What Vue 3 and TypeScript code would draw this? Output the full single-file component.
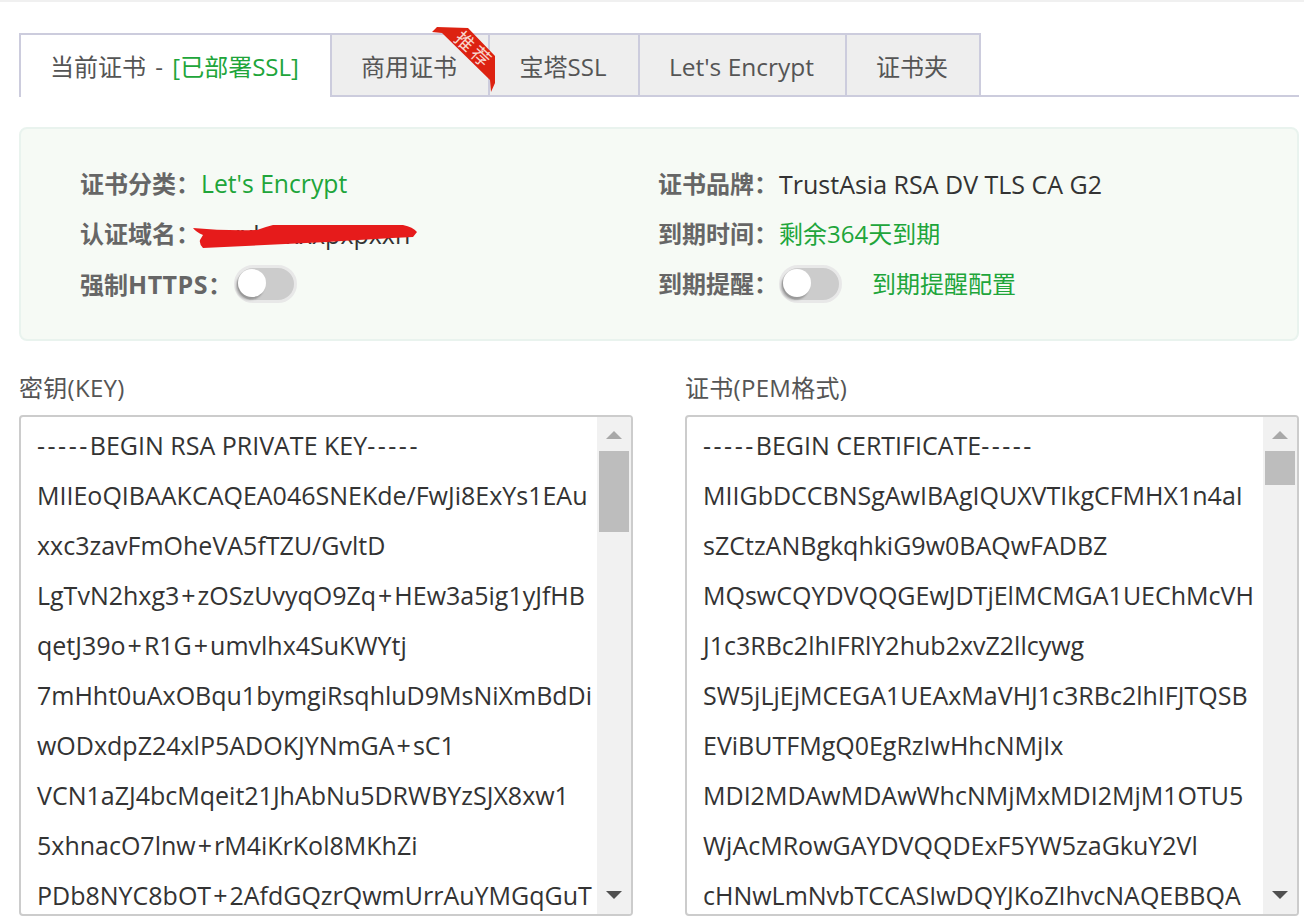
<script setup lang="ts">
interface Tab { label: string; note?: string; active?: boolean; latin?: boolean; width: number }
const tabs: Tab[] = [
  { label: '当前证书 - ', note: '[已部署SSL]', active: true, width: 313 },
  { label: '商用证书', width: 158 },
  { label: '宝塔SSL', width: 150 },
  { label: "Let's Encrypt", latin: true, width: 207 },
  { label: '证书夹', width: 134 },
]
const keyLines = [
  '-----BEGIN RSA PRIVATE KEY-----',
  'MIIEoQIBAAKCAQEA046SNEKde/FwJi8ExYs1EAu',
  'xxc3zavFmOheVA5fTZU/GvltD',
  'LgTvN2hxg3+zOSzUvyqO9Zq+HEw3a5ig1yJfHB',
  'qetJ39o+R1G+umvlhx4SuKWYtj',
  '7mHht0uAxOBqu1bymgiRsqhluD9MsNiXmBdDi',
  'wODxdpZ24xlP5ADOKJYNmGA+sC1',
  'VCN1aZJ4bcMqeit21JhAbNu5DRWBYzSJX8xw1',
  '5xhnacO7lnw+rM4iKrKol8MKhZi',
  'PDb8NYC8bOT+2AfdGQzrQwmUrrAuYMGqGuT',
]
const certLines = [
  '-----BEGIN CERTIFICATE-----',
  'MIIGbDCCBNSgAwIBAgIQUXVTIkgCFMHX1n4aI',
  'sZCtzANBgkqhkiG9w0BAQwFADBZ',
  'MQswCQYDVQQGEwJDTjElMCMGA1UEChMcVH',
  'J1c3RBc2lhIFRlY2hub2xvZ2llcywg',
  'SW5jLjEjMCEGA1UEAxMaVHJ1c3RBc2lhIFJTQSB',
  'EViBUTFMgQ0EgRzIwHhcNMjIx',
  'MDI2MDAwMDAwWhcNMjMxMDI2MjM1OTU5',
  'WjAcMRowGAYDVQQDExF5YW5zaGkuY2Vl',
  'cHNwLmNvbTCCASIwDQYJKoZIhvcNAQEBBQA',
]
const boxes = [
  { title: '密钥(KEY)', lines: keyLines, thumb: 81 },
  { title: '证书(PEM格式)', lines: certLines, thumb: 34 },
]
function tokens(line: string): string[] {
  return line.split(/(-+|\+)/).filter(Boolean)
}
function tokenClass(token: string): string {
  if (token[0] === '-') return 'dash'
  if (token === '+') return 'plus'
  return ''
}
</script>

<template>
  <div class="page">
    <div class="tabs">
      <div
        v-for="tab in tabs"
        :key="tab.label"
        class="tab"
        :class="{ active: tab.active, latin: tab.latin }"
        :style="{ width: tab.width + 'px' }"
      >
        {{ tab.label }}<span v-if="tab.note" class="green">{{ tab.note }}</span>
      </div>
      <div class="ribbon">
        <svg width="66" height="70" viewBox="0 0 66 70">
          <path d="M0 5 L5 0 L36 1 L63 29 L63 56 L59 65 L58 53 L10 6 Z" fill="#dd2211" />
        </svg>
        <span class="ribbon-text">推荐</span>
      </div>
    </div>

    <div class="panel">
      <div class="row"><b>证书分类：</b><span class="green value encrypt">Let's Encrypt</span></div>
      <div class="row"><b>证书品牌：</b><span class="value latin">TrustAsia RSA DV TLS CA G2</span></div>
      <div class="row">
        <b>认证域名：</b><span class="value latin">xxxxlxxxxxpxpxxn</span>
        <svg class="scribble" width="226" height="26" viewBox="0 0 226 26">
          <path d="M0 4 Q32 7 64 6 Q72 3 80 1 L210 1 Q220 3 224 8 L220 13 Q180 15 134 18 L10 24 Q6 20 7 16 L10 11 Q3 8 0 4 Z" fill="#e61b1b" />
        </svg>
      </div>
      <div class="row"><b>到期时间：</b><span class="green value">剩余364天到期</span></div>
      <div class="row">
        <b>强制<span class="https">HTTPS</span>：</b>
        <span class="switch first"></span>
      </div>
      <div class="row">
        <b>到期提醒：</b>
        <span class="switch"></span>
        <span class="green config">到期提醒配置</span>
      </div>
    </div>

    <div class="editors">
      <section v-for="box in boxes" :key="box.title" class="editor">
        <h3>{{ box.title }}</h3>
        <div class="box">
          <div class="lines">
            <div v-for="line in box.lines" :key="line">
              <span v-for="(token, i) in tokens(line)" :key="i" :class="tokenClass(token)">{{ token }}</span>
            </div>
          </div>
          <div class="scrollbar">
            <i class="up"></i>
            <i class="thumb" :style="{ height: box.thumb + 'px' }"></i>
            <i class="down"></i>
          </div>
        </div>
      </section>
    </div>
  </div>
</template>

<style>
html, body { margin: 0; background: #fff; overflow: hidden; }
</style>

<style scoped>
.page {
  box-sizing: border-box;
  width: 1304px;
  height: 916px;
  overflow: hidden;
  border-top: 2px solid #f0f0f0;
  padding: 31px 5px 0 19px;
  font-family: "Open Sans", "Noto Sans CJK SC", sans-serif;
  font-size: 24px;
  color: #333;
}
.green { color: #20a53a; }
.latin { font-size: 25px; }
.encrypt { font-size: 24.7px; }
.tabs {
  position: relative;
  display: flex;
  height: 64px;
  box-sizing: border-box;
  border-bottom: 2px solid #ccccdd;
}
.tab {
  box-sizing: border-box;
  height: 64px;
  padding-right: 2px;
  line-height: 63px;
  text-align: center;
  word-spacing: 3px;
  color: #555;
  background: #eeeeee;
  border: 2px solid #ccccdd;
  border-left-width: 0;
}
.tab.latin {
  font-size: 24.5px;
  word-spacing: 0;
}
.tab.active {
  background: #fff;
  border-left-width: 2px;
  border-bottom: 0;
  border-right-width: 2px;
}
.ribbon {
  position: absolute;
  left: 413px;
  top: -6px;
  width: 66px;
  height: 70px;
}
.ribbon svg { display: block; }
.ribbon-text {
  position: absolute;
  left: 17px;
  top: 11px;
  width: 50px;
  text-align: center;
  font-size: 19px;
  line-height: 24px;
  letter-spacing: 3px;
  color: #f8d4cc;
  transform: rotate(43deg);
}
.panel {
  box-sizing: border-box;
  height: 214px;
  margin-top: 30px;
  padding: 30px 59px 0;
  background: #f6faf5;
  border: 2px solid #e9f3ee;
  border-radius: 8px;
  display: grid;
  grid-template-columns: 578px 1fr;
  grid-auto-rows: 50px;
}
.row {
  position: relative;
  display: flex;
  align-items: center;
  line-height: 50px;
  white-space: nowrap;
}
.row b {
  font-weight: 700;
  color: #666;
}
.https {
  font-size: 25px;
  letter-spacing: 0.5px;
}
.value { margin-left: 1px; }
.scribble {
  position: absolute;
  left: 113px;
  top: 15px;
}
.switch {
  position: relative;
  display: block;
  width: 63px;
  height: 38px;
  margin-left: 1px;
  box-sizing: border-box;
  border-radius: 19px;
  background: #ccc;
  border: 3px solid #e8e8e8;
}
.switch.first { margin-left: 2px; }
.switch::before {
  content: "";
  position: absolute;
  left: 1px;
  top: 1px;
  width: 28px;
  height: 28px;
  border-radius: 50%;
  background: #fff;
  box-shadow: -2px 3px 2px rgba(0, 0, 0, 0.25);
}
.config { margin-left: 30px; }
.editors {
  display: grid;
  grid-template-columns: 614px 614px;
  column-gap: 52px;
  margin-top: 29px;
}
.editor h3 {
  margin: 0;
  height: 45px;
  font-size: 24px;
  line-height: 36px;
  letter-spacing: 0.3px;
  font-weight: 400;
  color: #555;
}
.box {
  box-sizing: border-box;
  height: 501px;
  border: 2px solid #ccc;
  border-radius: 4px;
  display: flex;
  overflow: hidden;
}
.lines {
  flex: 1;
  min-width: 0;
  padding: 3px 0 0 16px;
  font-size: 25px;
  line-height: 50px;
  white-space: nowrap;
  overflow: hidden;
  color: #333;
}
.lines > div { height: 50px; }
.dash { letter-spacing: 2.5px; }
.plus { padding: 0 2px; }
.scrollbar {
  width: 34px;
  flex: none;
  background: #f1f1f1;
  display: flex;
  flex-direction: column;
  align-items: center;
}
.up, .down {
  width: 0;
  height: 0;
  border-left: 8px solid transparent;
  border-right: 8px solid transparent;
}
.up {
  margin-top: 14px;
  border-bottom: 8px solid #a8a8a8;
}
.down {
  margin-top: auto;
  margin-bottom: 15px;
  border-top: 8px solid #505050;
}
.thumb {
  display: block;
  width: 30px;
  margin-top: 12px;
  background: #bdbdbd;
}
</style>
